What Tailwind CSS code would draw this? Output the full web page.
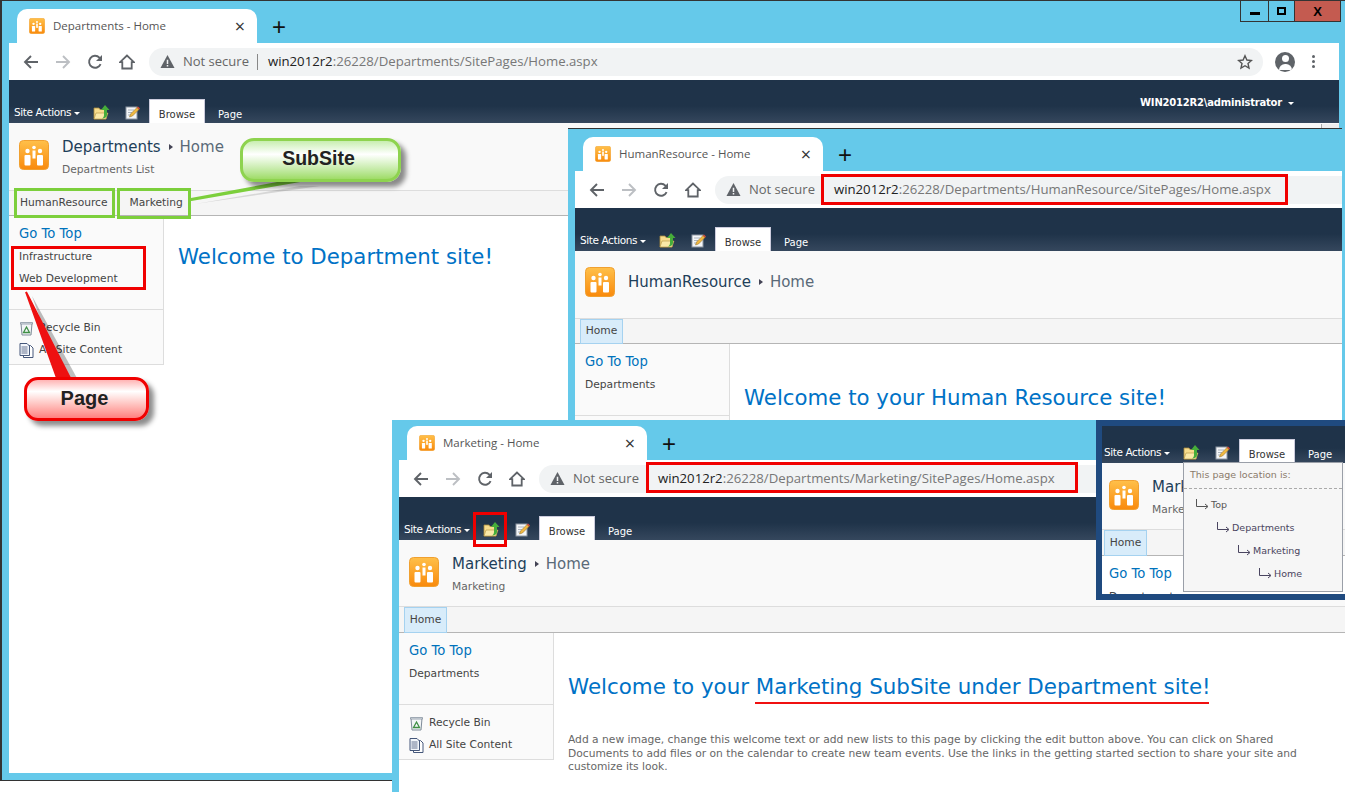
<!DOCTYPE html>
<html lang="en">
<head>
<meta charset="UTF-8" />
<title>SharePoint site hierarchy</title>
<script src="https://cdn.jsdelivr.net/npm/@tailwindcss/browser@4"></script>
</head>
<body class="m-0 overflow-hidden">
<svg width="0" height="0" class="absolute">
  <defs>
    <linearGradient id="logoGrad" x1="0" y1="0" x2="0" y2="1"><stop offset="0" stop-color="#ffc04a"/><stop offset="1" stop-color="#f98a0c"/></linearGradient>
    <symbol id="logo" viewBox="0 0 30 30">
      <rect x="0.5" y="0.5" width="29" height="29" rx="4" fill="url(#logoGrad)" stroke="#f0a030"/>
      <g fill="#fff"><circle cx="15" cy="7.500" r="1.800"/><circle cx="8.500" cy="11" r="2.200"/><circle cx="21" cy="11" r="2.200"/><rect x="13.500" y="10.500" width="3" height="8"/><rect x="5.500" y="15" width="6" height="10.500" rx="1"/><rect x="18" y="15" width="6" height="10.500" rx="1"/></g>
    </symbol>
    <symbol id="back" viewBox="0 0 16 16"><path d="M15 8H2.500M8 2 2 8l6 6" fill="none" stroke="currentColor" stroke-width="1.900"/></symbol>
    <symbol id="forward" viewBox="0 0 16 16"><path d="M1 8h12.500M8 2l6 6-6 6" fill="none" stroke="currentColor" stroke-width="1.900"/></symbol>
    <symbol id="reload" viewBox="0 0 16 16"><path d="M13.600 10.200A6 6 0 1 1 12.400 3.600L14.500 5.600" fill="none" stroke="currentColor" stroke-width="1.900"/><path d="M15 1v6H9z" fill="currentColor"/></symbol>
    <symbol id="home" viewBox="0 0 16 16"><path d="M8 1.500 1 8.200h2.300v6.300h9.400V8.200H15z" fill="none" stroke="currentColor" stroke-width="1.800"/></symbol>
    <symbol id="warn" viewBox="0 0 16 16"><path d="M8 1 15.500 15H.5z" fill="currentColor"/><path d="M7.200 6h1.600v4.600H7.200zM7.200 11.600h1.600v1.600H7.200z" fill="#f1f3f4"/></symbol>
    <symbol id="folder" viewBox="0 0 17 15"><path d="M1 3h5l1 1.500h6V14H1z" fill="#f7dc8c" stroke="#a98a3c" stroke-width=".8"/><path d="M1 14l2-6h12l-2 6z" fill="#fbe9a8" stroke="#b3923e" stroke-width=".6"/><path d="M12 0l4.500 5H14v5c0 2-2 3.500-5 3.500 1.500-1 2-2 2-3.500V5H8z" fill="#46ad3a"/></symbol>
    <symbol id="pencil" viewBox="0 0 15 15"><rect x="1" y="2" width="11" height="12" fill="#f4f6f8" stroke="#8b95a2"/><path d="M3 5h6M3 7.500h4M3 10h3" stroke="#9aa4b0" stroke-width=".8"/><path d="M4.500 12l1-3L12 2.500l2 2L7.500 11z" fill="#f0b840" stroke="#8a6a2a" stroke-width=".5"/><path d="M12 2.500l1-1 2 2-1 1z" fill="#d94a3a"/></symbol>
    <symbol id="bin" viewBox="0 0 15 15"><path d="M2 2.500h11l-1 11.500H3z" fill="#f2f5f7" stroke="#7e8b99"/><path d="M1.500 1.500h12v1.500h-12z" fill="#dfe5ea" stroke="#7e8b99" stroke-width=".7"/><path d="M7.500 6 10.500 11.500h-6z" fill="none" stroke="#3f8f45" stroke-width="1.300"/></symbol>
    <symbol id="pages" viewBox="0 0 15 15"><path d="M4.500 2.500h7l2.500 2.500v9.500H4.500z" fill="#fff" stroke="#45577a"/><path d="M1 .5h7l2.500 2.500v9.500H1z" fill="#f3f6fb" stroke="#45577a"/><path d="M2.500 4h6M2.500 6h6M2.500 8h6M2.500 10h6" stroke="#45577a" stroke-width=".8"/></symbol>
    <symbol id="star" viewBox="0 0 16 16"><path d="M8 1.800l1.900 4.200 4.500.5-3.400 3 1 4.500L8 11.700 4 14l1-4.500-3.400-3 4.500-.5z" fill="none" stroke="currentColor" stroke-width="1.400"/></symbol>
    <symbol id="crumb" viewBox="0 0 15 13"><path d="M1.500 0v7.500h11M10 5l3 2.500L10 10" fill="none" stroke="currentColor" stroke-width="1"/></symbol>
  </defs>
</svg>

<main class="relative w-[1345px] h-[792px] bg-white overflow-hidden font-['DejaVu_Sans',sans-serif]">

  <!-- ====== window 1 : Departments ====== -->
  <section class="absolute left-0 top-0 w-[1345px] h-[781px] bg-[#65c9ea] border-l-2 border-t border-b border-[#333] pl-[7px] pr-[6px]">
    <div class="h-[42px] pt-[8px] pl-[8px] flex items-center">
      <div class="w-[240px] h-[34px] bg-white rounded-t-[10px] flex items-center pl-[12px] pr-[12px] font-['Open_Sans',sans-serif] text-[11.500px] text-[#555]">
        <svg width="16" height="16"><use href="#logo"/></svg>
        <span class="ml-[8px] flex-1 whitespace-nowrap">Departments - Home</span>
        <span class="text-[#333] text-[18px] leading-none">×</span>
      </div>
      <span class="ml-[15px] mt-[2px] text-[24px] leading-none text-[#111] font-['Liberation_Sans',sans-serif]">+</span>
    </div>
    <div class="h-[37px] bg-white flex items-center pl-[14px] pr-[14px] text-[#5f6368]">
      <svg width="16" height="16"><use href="#back"/></svg>
      <svg width="16" height="16" class="ml-[16px] text-[#bcbfc3]"><use href="#forward"/></svg>
      <svg width="16" height="16" class="ml-[16px]"><use href="#reload"/></svg>
      <svg width="16" height="16" class="ml-[16px]"><use href="#home"/></svg>
      <div class="ml-[14px] w-[1114px] h-[28px] rounded-full bg-[#f1f3f4] flex items-center pl-[11px] font-['Open_Sans',sans-serif]">
        <svg width="15" height="15"><use href="#warn"/></svg>
        <span class="ml-[8px] text-[13px] text-[#666] whitespace-nowrap">Not secure</span>
        <span class="ml-[8px] w-px h-[16px] bg-[#888]"></span>
        <span class="ml-[10px] text-[13.200px] text-[#777] whitespace-nowrap"><span class="text-[#222]">win2012r2</span>:26228/Departments/SitePages/Home.aspx</span>
        <svg width="16" height="16" class="ml-auto mr-[10px] text-[#555]"><use href="#star"/></svg>
      </div>
      <span class="ml-[12px] w-[20px] h-[20px] rounded-full bg-[#5f6368] relative overflow-hidden">
        <span class="absolute left-[6.500px] top-[3.500px] w-[7px] h-[7px] rounded-full bg-white"></span>
        <span class="absolute left-[3.500px] top-[12px] w-[13px] h-[6px] rounded-t-full bg-white"></span>
      </span>
      <span class="ml-[17px] flex flex-col gap-[2px]"><i class="block w-[3px] h-[3px] rounded-full bg-[#5f6368]"></i><i class="block w-[3px] h-[3px] rounded-full bg-[#5f6368]"></i><i class="block w-[3px] h-[3px] rounded-full bg-[#5f6368]"></i></span>
    </div>
    <div class="h-[43px] bg-gradient-to-b from-[#1f3349] from-60% to-[#35475d] flex items-end pl-[5px] text-white">
      <span class="mb-[2px] text-[10.500px] w-[66px] whitespace-nowrap tracking-[-0.4px]">Site Actions<i class="inline-block ml-[3px] align-middle border-x-[3px] border-t-[3px] border-x-transparent border-t-white"></i></span>
      <svg width="17" height="15" class="ml-[13px] mb-[3px]"><use href="#folder"/></svg>
      <svg width="15" height="15" class="ml-[15px] mb-[3px]"><use href="#pencil"/></svg>
      <span class="ml-[9px] w-[56px] h-[24px] pt-[6px] bg-white border-t border-x border-[#ccd] text-[#333] text-[10px] flex items-center justify-center">Browse</span>
      <span class="ml-[13px] mb-[1px] text-[10px]">Page</span>
      <span class="ml-auto mr-[45px] mb-[13px] text-[10px] font-bold whitespace-nowrap tracking-[-0.2px]">WIN2012R2\administrator<i class="inline-block ml-[6px] align-middle border-x-[3px] border-t-[3px] border-x-transparent border-t-white"></i></span>
    </div>
    <div class="h-[67px] bg-[#f9f9f9] flex pt-[17px] pl-[10px]">
      <svg width="30" height="30"><use href="#logo"/></svg>
      <div class="ml-[13px]">
        <p class="text-[15px] leading-[14px] text-[#1e3f5a] whitespace-nowrap flex items-center">Departments<i class="ml-[8px] mr-[7px] border-y-[3.500px] border-l-[4px] border-y-transparent border-l-[#445]"></i><span class="text-[#5a6a78]">Home</span></p>
        <p class="mt-[9px] text-[10.700px] leading-[13px] text-[#666]">Departments List</p>
      </div>
    </div>
    <nav class="h-[26px] bg-[#f5f5f5] border-t border-b border-t-[#ddd] border-b-[#b5b5b5] flex items-center text-[10.700px] text-[#444]">
      <span class="ml-[11px]">HumanResource</span>
      <span class="ml-[22px]">Marketing</span>
    </nav>
    <div class="flex h-[557px] bg-white">
      <aside class="w-[155px] h-[149px] bg-[#fafafa] border-r border-b border-[#ddd] flex flex-col pl-[10px] text-[10.700px] text-[#444]">
        <p class="mt-[10px] text-[13.200px] leading-[15px] text-[#0072bc]">Go To Top</p>
        <p class="mt-[9px] leading-[13px]">Infrastructure</p>
        <p class="mt-[9px] leading-[13px]">Web Development</p>
        <div class="mt-[24px] -ml-[10px] border-t border-[#ddd] pl-[10px] pt-[10px] flex flex-col gap-[6px]">
          <p class="flex items-center gap-[5px] h-[16px]"><svg width="15" height="15"><use href="#bin"/></svg>Recycle Bin</p>
          <p class="flex items-center gap-[5px] h-[16px]"><svg width="15" height="15"><use href="#pages"/></svg>All Site Content</p>
        </div>
      </aside>
      <h1 class="ml-[14px] mt-[27px] text-[21.300px] leading-[28px] text-[#0072c6] whitespace-nowrap">Welcome to Department site!</h1>
    </div>
  </section>

  <!-- scrollbar cell at the top right of window 1 -->
  <div class="absolute left-[1321px] top-[124px] w-[18px] h-[4px] bg-[#eee] border-l border-[#aaa]"></div>

  <!-- window controls of window 1 -->
  <div class="absolute left-[1240px] top-0 w-[101px] h-[22px] border border-[#333] flex">
    <span class="w-[28px] border-r border-[#333] flex items-center justify-center pt-[5px]"><i class="block w-[10px] h-[3px] bg-black"></i></span>
    <span class="w-[26px] border-r border-[#333] flex items-center justify-center"><i class="block w-[9px] h-[8px] border-2 border-black"></i></span>
    <span class="flex-1 bg-[#c45b50] flex items-center justify-center text-[13px] font-bold leading-none text-black font-['Liberation_Sans',sans-serif]">X</span>
  </div>

  <!-- ====== window 2 : HumanResource ====== -->
  <section class="absolute left-[568px] top-[128px] w-[774px] h-[292px] bg-[#65c9ea] border-t border-[#333] pl-[7px] overflow-hidden">
    <div class="h-[42px] pt-[8px] pl-[8px] flex items-center">
      <div class="w-[240px] h-[34px] bg-white rounded-t-[10px] flex items-center pl-[12px] pr-[12px] font-['Open_Sans',sans-serif] text-[11.500px] text-[#555]">
        <svg width="16" height="16"><use href="#logo"/></svg>
        <span class="ml-[8px] flex-1 whitespace-nowrap">HumanResource - Home</span>
        <span class="text-[#333] text-[18px] leading-none">×</span>
      </div>
      <span class="ml-[15px] mt-[2px] text-[24px] leading-none text-[#111] font-['Liberation_Sans',sans-serif]">+</span>
    </div>
    <div class="h-[37px] bg-white flex items-center pl-[14px] text-[#5f6368]">
      <svg width="16" height="16"><use href="#back"/></svg>
      <svg width="16" height="16" class="ml-[16px] text-[#bcbfc3]"><use href="#forward"/></svg>
      <svg width="16" height="16" class="ml-[16px]"><use href="#reload"/></svg>
      <svg width="16" height="16" class="ml-[16px]"><use href="#home"/></svg>
      <div class="ml-[14px] flex-1 h-[28px] rounded-l-full bg-[#f1f3f4] flex items-center pl-[11px] font-['Open_Sans',sans-serif]">
        <svg width="15" height="15"><use href="#warn"/></svg>
        <span class="ml-[8px] text-[13px] text-[#666] whitespace-nowrap">Not secure</span>
        <span class="ml-[8px] w-px h-[16px] bg-[#888]"></span>
        <span class="ml-[10px] text-[13.200px] text-[#777] whitespace-nowrap"><span class="text-[#222]">win2012r2</span>:26228/Departments/HumanResource/SitePages/Home.aspx</span>
      </div>
    </div>
    <div class="h-[43px] bg-gradient-to-b from-[#1f3349] from-60% to-[#35475d] flex items-end pl-[5px] text-white">
      <span class="mb-[2px] text-[10.500px] w-[66px] whitespace-nowrap tracking-[-0.4px]">Site Actions<i class="inline-block ml-[3px] align-middle border-x-[3px] border-t-[3px] border-x-transparent border-t-white"></i></span>
      <svg width="17" height="15" class="ml-[13px] mb-[3px]"><use href="#folder"/></svg>
      <svg width="15" height="15" class="ml-[15px] mb-[3px]"><use href="#pencil"/></svg>
      <span class="ml-[9px] w-[56px] h-[24px] pt-[6px] bg-white border-t border-x border-[#ccd] text-[#333] text-[10px] flex items-center justify-center">Browse</span>
      <span class="ml-[13px] mb-[1px] text-[10px]">Page</span>
    </div>
    <div class="h-[67px] bg-[#f9f9f9] flex pt-[16px] pl-[10px]">
      <svg width="30" height="30"><use href="#logo"/></svg>
      <p class="ml-[13px] mt-[8px] text-[15px] leading-[14px] text-[#1e3f5a] whitespace-nowrap flex items-center h-[14px]">HumanResource<i class="ml-[8px] mr-[7px] border-y-[3.500px] border-l-[4px] border-y-transparent border-l-[#445]"></i><span class="text-[#5a6a78]">Home</span></p>
    </div>
    <nav class="h-[26px] bg-[#f5f5f5] border-t border-b border-t-[#ddd] border-b-[#b5b5b5] flex text-[10.700px] text-[#444]">
      <span class="ml-[5px] w-[43px] h-[25px] bg-[#d8ecfa] border border-[#a5d2f0] flex items-center justify-center">Home</span>
    </nav>
    <div class="flex h-[80px] bg-white">
      <aside class="w-[155px] h-[80px] bg-[#fafafa] border-r border-[#ddd] flex flex-col pl-[10px] text-[10.700px] text-[#444]">
        <p class="mt-[10px] text-[13.200px] leading-[15px] text-[#0072bc]">Go To Top</p>
        <p class="mt-[9px] leading-[13px]">Departments</p>
        <div class="mt-[24px] -ml-[10px] border-t border-[#ddd]"></div>
      </aside>
      <h1 class="ml-[14px] mt-[40px] text-[21.300px] leading-[28px] text-[#0072c6] whitespace-nowrap">Welcome to your Human Resource site!</h1>
    </div>
  </section>

  <!-- ====== window 3 : Marketing ====== -->
  <section class="absolute left-[392px] top-[420px] w-[953px] h-[372px] bg-[#65c9ea] pl-[7px] overflow-hidden">
    <div class="h-[40px] pt-[6px] pl-[8px] flex items-center">
      <div class="w-[240px] h-[34px] bg-white rounded-t-[10px] flex items-center pl-[12px] pr-[12px] font-['Open_Sans',sans-serif] text-[11.500px] text-[#555]">
        <svg width="16" height="16"><use href="#logo"/></svg>
        <span class="ml-[8px] flex-1 whitespace-nowrap">Marketing - Home</span>
        <span class="text-[#333] text-[18px] leading-none">×</span>
      </div>
      <span class="ml-[15px] mt-[2px] text-[24px] leading-none text-[#111] font-['Liberation_Sans',sans-serif]">+</span>
    </div>
    <div class="h-[37px] bg-white flex items-center pl-[14px] text-[#5f6368]">
      <svg width="16" height="16"><use href="#back"/></svg>
      <svg width="16" height="16" class="ml-[16px] text-[#bcbfc3]"><use href="#forward"/></svg>
      <svg width="16" height="16" class="ml-[16px]"><use href="#reload"/></svg>
      <svg width="16" height="16" class="ml-[16px]"><use href="#home"/></svg>
      <div class="ml-[14px] flex-1 h-[28px] rounded-l-full bg-[#f1f3f4] flex items-center pl-[11px] font-['Open_Sans',sans-serif]">
        <svg width="15" height="15"><use href="#warn"/></svg>
        <span class="ml-[8px] text-[13px] text-[#666] whitespace-nowrap">Not secure</span>
        <span class="ml-[8px] w-px h-[16px] bg-[#888]"></span>
        <span class="ml-[10px] text-[13.200px] text-[#777] whitespace-nowrap"><span class="text-[#222]">win2012r2</span>:26228/Departments/Marketing/SitePages/Home.aspx</span>
      </div>
    </div>
    <div class="h-[43px] bg-gradient-to-b from-[#1f3349] from-60% to-[#35475d] flex items-end pl-[5px] text-white">
      <span class="mb-[2px] text-[10.500px] w-[66px] whitespace-nowrap tracking-[-0.4px]">Site Actions<i class="inline-block ml-[3px] align-middle border-x-[3px] border-t-[3px] border-x-transparent border-t-white"></i></span>
      <svg width="17" height="15" class="ml-[13px] mb-[3px]"><use href="#folder"/></svg>
      <svg width="15" height="15" class="ml-[15px] mb-[3px]"><use href="#pencil"/></svg>
      <span class="ml-[9px] w-[56px] h-[24px] pt-[6px] bg-white border-t border-x border-[#ccd] text-[#333] text-[10px] flex items-center justify-center">Browse</span>
      <span class="ml-[13px] mb-[1px] text-[10px]">Page</span>
    </div>
    <div class="h-[66px] bg-[#f9f9f9] flex pt-[17px] pl-[10px]">
      <svg width="30" height="30"><use href="#logo"/></svg>
      <div class="ml-[13px]">
        <p class="text-[15px] leading-[14px] text-[#1e3f5a] whitespace-nowrap flex items-center">Marketing<i class="ml-[8px] mr-[7px] border-y-[3.500px] border-l-[4px] border-y-transparent border-l-[#445]"></i><span class="text-[#5a6a78]">Home</span></p>
        <p class="mt-[9px] text-[10.700px] leading-[13px] text-[#666]">Marketing</p>
      </div>
    </div>
    <nav class="h-[27px] bg-[#f5f5f5] border-t border-b border-t-[#ddd] border-b-[#b5b5b5] flex text-[10.700px] text-[#444]">
      <span class="ml-[5px] w-[43px] h-[26px] bg-[#d8ecfa] border border-[#a5d2f0] flex items-center justify-center">Home</span>
    </nav>
    <div class="flex h-[160px] bg-white">
      <aside class="w-[155px] h-[127px] bg-[#fafafa] border-r border-b border-[#ddd] flex flex-col pl-[10px] text-[10.700px] text-[#444]">
        <p class="mt-[10px] text-[13.200px] leading-[15px] text-[#0072bc]">Go To Top</p>
        <p class="mt-[9px] leading-[13px]">Departments</p>
        <div class="mt-[24px] -ml-[10px] border-t border-[#ddd] pl-[10px] pt-[10px] flex flex-col gap-[6px]">
          <p class="flex items-center gap-[5px] h-[16px]"><svg width="15" height="15"><use href="#bin"/></svg>Recycle Bin</p>
          <p class="flex items-center gap-[5px] h-[16px]"><svg width="15" height="15"><use href="#pages"/></svg>All Site Content</p>
        </div>
      </aside>
      <div class="ml-[14px] w-[745px]">
        <h1 class="mt-[40px] text-[21.400px] leading-[28px] text-[#0072c6] whitespace-nowrap">Welcome to your Marketing SubSite under Department site!</h1>
        <p class="mt-[32px] text-[10.700px] leading-[13.500px] text-[#666]">Add a new image, change this welcome text or add new lists to this page by clicking the edit button above. You can click on Shared Documents to add files or on the calendar to create new team events. Use the links in the getting started section to share your site and customize its look.</p>
      </div>
    </div>
  </section>

  <!-- ====== inset : "up" menu ====== -->
  <section class="absolute left-[1096px] top-[420px] w-[249px] h-[180px] border-[6px] border-r-0 border-[#1f4a7f] bg-white overflow-hidden">
    <div class="h-[37px] bg-gradient-to-b from-[#1f3349] from-60% to-[#35475d] flex items-end pl-[2px] text-white">
      <span class="mb-[2px] text-[10.500px] w-[66px] whitespace-nowrap tracking-[-0.4px]">Site Actions<i class="inline-block ml-[3px] align-middle border-x-[3px] border-t-[3px] border-x-transparent border-t-white"></i></span>
      <svg width="17" height="15" class="ml-[13px] mb-[3px]"><use href="#folder"/></svg>
      <svg width="15" height="15" class="ml-[15px] mb-[3px]"><use href="#pencil"/></svg>
      <span class="ml-[9px] w-[56px] h-[24px] pt-[6px] bg-white border-t border-x border-[#ccd] text-[#333] text-[10px] flex items-center justify-center">Browse</span>
      <span class="ml-[13px] mb-[1px] text-[10px]">Page</span>
    </div>
    <div class="h-[66px] bg-[#f9f9f9] flex pt-[17px] pl-[7px]">
      <svg width="30" height="30"><use href="#logo"/></svg>
      <div class="ml-[13px]">
        <p class="text-[15px] leading-[14px] text-[#1e3f5a] whitespace-nowrap">Marketing</p>
        <p class="mt-[9px] text-[10.700px] leading-[13px] text-[#666]">Marketing</p>
      </div>
    </div>
    <nav class="h-[27px] bg-[#f5f5f5] border-t border-b border-t-[#ddd] border-b-[#b5b5b5] flex text-[10.700px] text-[#444]">
      <span class="ml-[2px] w-[43px] h-[26px] bg-[#d8ecfa] border border-[#a5d2f0] flex items-center justify-center">Home</span>
    </nav>
    <div class="pl-[7px] text-[13.200px] leading-[15px] text-[#0072bc] pt-[10px]">Go To Top</div>
    <p class="pl-[7px] mt-[9px] text-[10.700px] leading-[13px] text-[#444]">Departments</p>

    <!-- popup -->
    <div class="absolute left-[81px] top-[36px] w-[160px] h-[130px] bg-[#f6f6f6] border border-[#9a9fa8] text-[9.500px] text-[#555]">
      <p class="h-[26px] pl-[6px] flex items-center text-[#8a7a6a] border-b border-dashed border-[#aaa]">This page location is:</p>
      <div class="mt-[8px] flex flex-col gap-[7px]">
        <p class="h-[16px] pl-[11px] flex items-center gap-[1px]"><svg width="15" height="13"><use href="#crumb"/></svg>Top</p>
        <p class="h-[16px] pl-[32px] flex items-center gap-[1px] text-[#4a4560]"><svg width="15" height="13"><use href="#crumb"/></svg>Departments</p>
        <p class="h-[16px] pl-[53px] flex items-center gap-[1px] text-[#4a4560]"><svg width="15" height="13"><use href="#crumb"/></svg>Marketing</p>
        <p class="h-[16px] pl-[74px] flex items-center gap-[1px] text-[#4a4560]"><svg width="15" height="13"><use href="#crumb"/></svg>Home</p>
      </div>
    </div>
  </section>

  <!-- ====== annotations ====== -->
  <div class="absolute left-[14px] top-[188px] w-[101px] h-[30px] border-[3px] border-[#7ccf3c]"></div>
  <div class="absolute left-[117px] top-[188px] w-[74px] h-[31px] border-[3px] border-[#7ccf3c]"></div>
  <div class="absolute left-[11px] top-[246px] w-[135px] h-[44px] border-[3px] border-[#f00000]"></div>
  <div class="absolute left-[821px] top-[174px] w-[467px] h-[31px] border-[3px] border-[#f00000]"></div>
  <div class="absolute left-[646px] top-[462px] w-[432px] h-[31px] border-[3px] border-[#f00000]"></div>
  <div class="absolute left-[473px] top-[512px] w-[34px] h-[35px] border-[3px] border-[#f00000]"></div>
  <div class="absolute left-[755px] top-[702px] w-[454px] h-[2px] bg-[#f01010]"></div>

  <svg class="absolute left-0 top-0 pointer-events-none" width="1345" height="792">
    <path d="M195 204 L300 186 L320 186z" fill="#000" fill-opacity=".12"/>
    <path d="M32 296 L62 380 L78 380z" fill="#000" fill-opacity=".25"/>
    <path d="M191 199 L288 181 L300 181 L191 200z" fill="#7ccf3c" stroke="#7ccf3c" stroke-width="2"/>
    <path d="M26 292 L57 378 L70 378z" fill="#ee1111" stroke="#ee1111" stroke-width="2"/>
  </svg>

  <div class="absolute left-[240px] top-[138px] w-[161px] h-[44px] rounded-[14px] border-[3px] border-[#8ed34f] bg-gradient-to-b from-[#c8eeb0] via-white via-35% to-[#9fdc66] shadow-[5px_5px_5px_rgba(0,0,0,0.45)] flex items-center justify-center pb-[2px] pr-[4px] font-['Liberation_Sans',sans-serif] font-bold text-[19.500px] text-[#222]">SubSite</div>
  <div class="absolute left-[24px] top-[377px] w-[125px] h-[44px] rounded-[14px] border-[3px] border-[#f00000] bg-gradient-to-b from-[#ffb4b4] via-white via-30% to-[#ff7f7f] shadow-[5px_5px_5px_rgba(0,0,0,0.45)] flex items-center justify-center pb-[2px] pr-[4px] font-['Liberation_Sans',sans-serif] font-bold text-[20px] text-[#222]">Page</div>
</main>
</body>
</html>
